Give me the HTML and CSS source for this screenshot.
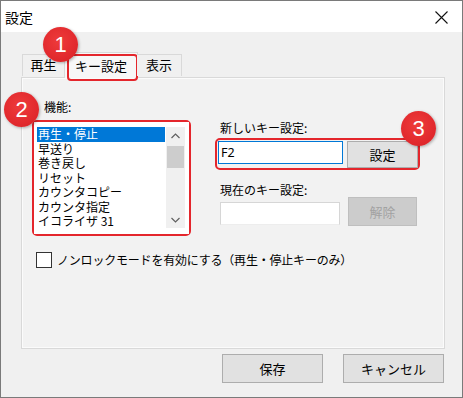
FILE: index.html
```html
<!DOCTYPE html>
<html lang="ja">
<head>
<meta charset="utf-8">
<title>設定</title>
<link rel="stylesheet" href="styles.css">
</head>
<body>
<div class="window">
  <div class="titlebar">
    <span class="title">設定</span>
    <svg class="close" width="13" height="13" viewBox="0 0 13 13"><path d="M0.5 0.5 L12.5 12.5 M12.5 0.5 L0.5 12.5" stroke="#111" stroke-width="1.1" fill="none"/></svg>
  </div>
  <div class="content">
    <div class="tabs">
      <div class="tab">再生</div>
      <div class="tab selected">キー設定<span class="mark-tab"></span></div>
      <div class="tab">表示</div>
    </div>
    <div class="panel">
      <div class="panel-top">
        <div class="left-col">
          <div class="label func-label">機能:</div>
          <div class="redbox list-box">
            <div class="listbox">
              <ul class="items">
                <li class="sel">再生・停止</li>
                <li>早送り</li>
                <li>巻き戻し</li>
                <li>リセット</li>
                <li>カウンタコピー</li>
                <li>カウンタ指定</li>
                <li>イコライザ 31</li>
              </ul>
              <div class="scrollbar">
                <div class="sb-btn"><svg width="9" height="6" viewBox="0 0 9 6"><path d="M0.5 5 L4.5 1 L8.5 5" stroke="#606060" stroke-width="1.2" fill="none"/></svg></div>
                <div class="sb-thumb"></div>
                <div class="sb-space"></div>
                <div class="sb-btn"><svg width="9" height="6" viewBox="0 0 9 6"><path d="M0.5 1 L4.5 5 L8.5 1" stroke="#606060" stroke-width="1.2" fill="none"/></svg></div>
              </div>
            </div>
          </div>
        </div>
        <div class="right-col">
          <div class="label">新しいキー設定:</div>
          <div class="redbox key-box">
            <div class="input focused">F2</div>
            <div class="button set-btn">設定</div>
          </div>
          <div class="label cur-label">現在のキー設定:</div>
          <div class="cur-row">
            <div class="input plain"></div>
            <div class="button disabled">解除</div>
          </div>
        </div>
      </div>
      <label class="check-row"><span class="checkbox"></span><span class="check-text">ノンロックモードを有効にする（再生・停止キーのみ）</span></label>
    </div>
    <div class="footer">
      <div class="button foot-btn">保存</div>
      <div class="button foot-btn">キャンセル</div>
    </div>
  </div>
  <div class="badge b1">1</div>
  <div class="badge b2">2</div>
  <div class="badge b3">3</div>
</div>
</body>
</html>
```
FILE: styles.css
```css
* { box-sizing: border-box; }
html, body { margin: 0; padding: 0; background: #f0f0f0; }
body {
  font-family: "Noto Sans CJK JP", "Noto Sans", sans-serif;
  font-size: 12px;
  color: #000;
}
.window {
  position: relative;
  width: 463px;
  height: 398px;
  border: 1px solid #7a7a7a;
  background: #f0f0f0;
  overflow: hidden;
}
.titlebar {
  height: 31px;
  background: #fff;
  display: flex;
  align-items: center;
  justify-content: space-between;
  padding: 0 14px 0 4px;
}
.title { font-size: 14px; line-height: 16px; }
.close { display: block; margin-top: 1px; }

.content { padding: 19px 17px 0 20px; }
.tabs {
  display: flex;
  align-items: flex-end;
  height: 26px;
  padding-left: 1px;
  position: relative;
  z-index: 2;
}
.tab {
  position: relative;
  height: 22px;
  border: 1px solid #d9d9d9;
  border-bottom: none;
  background: #f0f0f0;
  padding: 0 6px;
  line-height: 20px;
  font-size: 13px;
  margin-bottom: 1px;
}
.tab:first-child { width: 43px; text-align: center; }
.tab:last-child { width: 45px; text-align: center; border-left: none; }
.tab.selected {
  height: 26px;
  width: 74px;
  margin-bottom: -1px;
  background: #f7f7f7;
  padding: 3px 0 0 0;
  text-align: center;
  margin-left: -1px;
  margin-right: -1px;
}
.mark-tab {
  position: absolute;
  left: 2px;
  top: 1px;
  width: 71px;
  height: 27px;
  border: 2px solid #e4262c;
  border-radius: 4px;
}
.panel {
  width: 424px;
  height: 272px;
  border: 1px solid #d9d9d9;
  box-shadow: inset 0 0 0 1px #fbfbfb;
  background: #f2f2f2;
  padding: 19px 0 0 10px;
}
.panel-top { display: flex; }
.label { line-height: 14px; height: 14px; white-space: nowrap; }
.func-label { padding-left: 12px; height: 16px; line-height: 16px; margin-bottom: 5px; margin-top: 2px; }
.left-col { width: 159px; }
.redbox { border: 2px solid #e4262c; border-radius: 5px; }
.list-box { width: 159px; height: 116px; }
.listbox {
  background: #fff;
  height: 100%;
  display: flex;
  padding: 5px 3px 0 3px;
  gap: 1px;
}
.items { list-style: none; margin: 0; padding: 0; width: 128px; }
.items li { line-height: 14px; height: 14px; margin-bottom: 0.5px; white-space: nowrap; padding-left: 1px; font-size: 12px; }
.items li.sel { background: #0078d7; color: #fff; height: 14.5px; margin-bottom: 0; }
.scrollbar {
  width: 19px;
  height: 101px;
  background: #f0f0f0;
  display: flex;
  flex-direction: column;
}
.sb-btn { height: 17px; display: flex; align-items: center; justify-content: center; }
.sb-thumb { height: 22px; margin-top: 2px; background: #cdcdcd; margin-left: 1px; margin-right: 1px; }
.sb-space { flex: 1; }

.right-col { margin-left: 24px; padding-top: 24px; }
.right-col .label { padding-left: 5px; }
.key-box {
  margin-top: 3px;
  width: 205px;
  height: 32px;
  display: flex;
  align-items: flex-start;
  padding: 1px 0 0 1px;
  gap: 4px;
}
.input {
  background: #fff;
  height: 23px;
  line-height: 21px;
  padding-left: 2px;
  font-family: "Noto Sans", sans-serif;
  font-size: 12.5px;
}
.focused { width: 125px; border: 1px solid #0078d7; }
.button {
  display: flex;
  align-items: center;
  justify-content: center;
  background: #e1e1e1;
  border: 1px solid #adadad;
  font-size: 13px;
}
.set-btn { width: 71px; height: 27px; }
.cur-label { margin-top: 13px; }
.cur-row { display: flex; align-items: flex-end; padding-left: 5px; gap: 8px; }
.plain { width: 120px; border: 1px solid #d6d6d6; border-bottom-color: #ededed; margin-bottom: 1px; }
.disabled { width: 69px; height: 29px; background: #cccccc; border-color: #bfbfbf; color: #a2a2a2; }

.check-row { display: flex; align-items: center; gap: 5px; margin-top: 16px; margin-left: 4px; height: 16px; line-height: 16px; white-space: nowrap; }
.check-text { letter-spacing: -0.2px; }
.checkbox { width: 16px; height: 16px; border: 1px solid #333; background: #fff; }

.footer { display: flex; justify-content: flex-end; gap: 20px; margin-top: 5px; margin-right: 1px; }
.foot-btn { width: 101px; height: 29px; }

.badge {
  position: absolute;
  width: 35px;
  height: 35px;
  border-radius: 50%;
  background: radial-gradient(circle at 45% 40%, #ee3b3b 0%, #e22a2e 60%, #d42126 100%);
  box-shadow: 1px 1px 3px rgba(0,0,0,0.3);
  color: #fff;
  font-family: "Liberation Sans", "DejaVu Sans", sans-serif;
  font-size: 22px;
  line-height: 35px;
  text-align: center;
  z-index: 5;
}
.b1 { left: 42px; top: 26px; }
.b2 { left: 3px; top: 91px; }
.b3 { left: 400px; top: 110px; }
```
